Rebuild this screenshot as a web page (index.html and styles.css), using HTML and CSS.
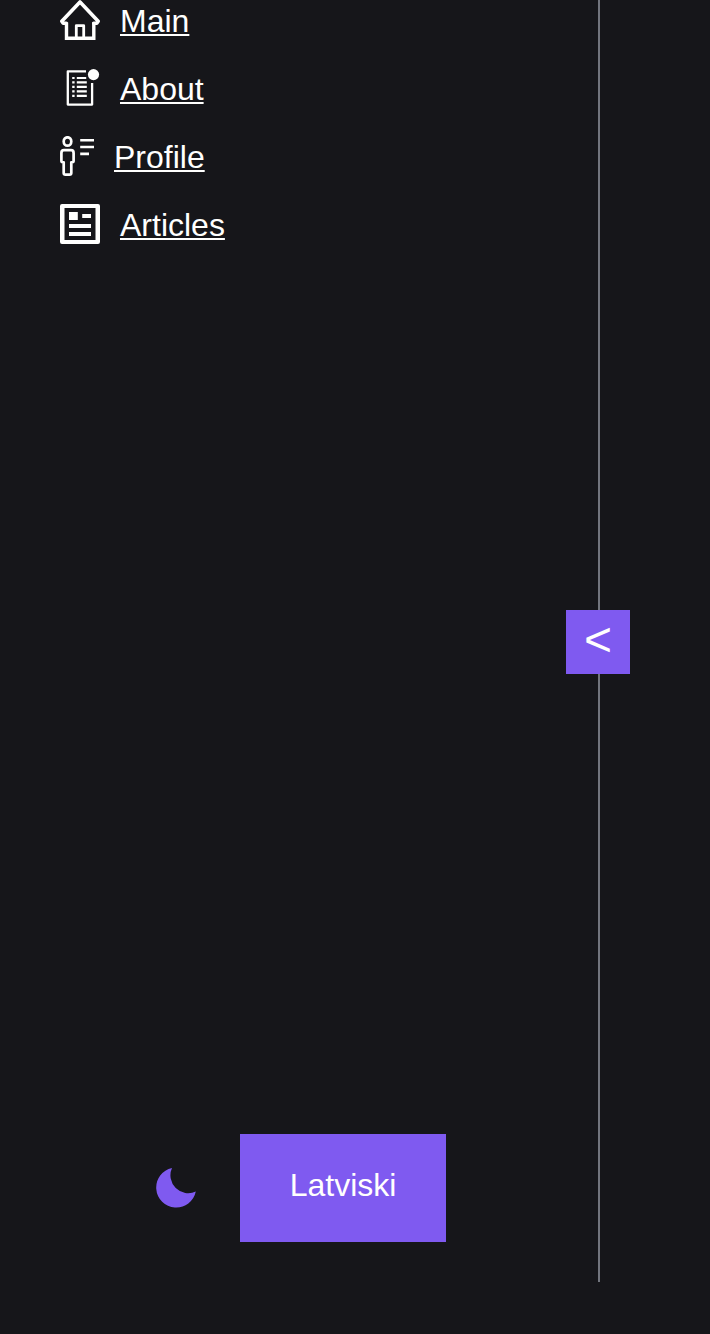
FILE: index.html
```html
<!DOCTYPE html>
<html lang="en">
<head>
<meta charset="utf-8">
<title>Sidebar</title>
<link rel="stylesheet" href="styles.css">
</head>
<body>
<aside class="sidebar">
  <nav class="menu">
    <a class="item" href="#">
      <svg class="icon" width="40" height="40" viewBox="0 0 40 40"><path fill="none" stroke="currentColor" stroke-width="3.6" stroke-linejoin="round" stroke-linecap="round" d="M6.3 23.2H3.2L1.8 21.2 20 2 38.2 21.2 36.8 23.2H33.7"/><path fill="none" stroke="currentColor" stroke-width="3.4" d="M6.5 22.5V38.300H33.800V22.500"/><path fill="none" stroke="currentColor" stroke-width="2.800" stroke-linejoin="round" d="M16.300 38V25.600H23.700V38"/></svg>
      <span class="label">Main</span>
    </a>
    <a class="item" href="#">
      <svg class="icon" width="40" height="40" viewBox="0 0 40 40"><path fill="none" stroke="currentColor" stroke-width="2.300" stroke-linejoin="round" d="M26 3.300H7.800V36.600H32.100V15"/><circle cx="33.500" cy="6.600" r="5.600" fill="currentColor"/><path fill="none" stroke="currentColor" stroke-width="2.200" d="M12.200 10H14.600M16.800 10H26.200M12.200 14.400H14.600M16.800 14.400H26.800M12.200 18.800H14.600M16.800 18.800H26.800M12.200 23.300H14.600M16.800 23.300H26.800M12.200 27.800H14.600M16.800 27.800H26.800"/></svg>
      <span class="label">About</span>
    </a>
    <a class="item" href="#">
      <svg class="icon" width="34" height="40" viewBox="0 0 34 40"><g fill="none" stroke="currentColor" stroke-width="2.700" stroke-linejoin="round"><ellipse cx="7.500" cy="5.500" rx="3.800" ry="4.200"/><path d="M4 14.200H11Q13.600 14.200 13.600 17V25Q13.600 26.300 11.300 26.300V37Q11.300 38.600 9.500 38.600H5.500Q3.700 38.600 3.700 37V26.300Q1.400 26.300 1.400 25V17Q1.400 14.200 4 14.200Z"/><path stroke-width="2.600" d="M20.200 4.200H34M20.200 11H34M20.200 17.900H29"/></g></svg>
      <span class="label">Profile</span>
    </a>
    <a class="item" href="#">
      <svg class="icon" width="40" height="40" viewBox="0 0 40 40"><path fill="currentColor" fill-rule="evenodd" d="M2 0H38Q40 0 40 2V38Q40 40 38 40H2Q0 40 0 38V2Q0 0 2 0ZM4.500 4V36H35.500V4Z"/><path fill="currentColor" d="M9 8H17.800V16H9ZM22.200 10H31V14H22.200ZM9 20H31V24H9ZM9 28H31V32H9Z"/></svg>
      <span class="label">Articles</span>
    </a>
  </nav>
  <div class="switchers">
    <button class="theme" aria-label="Theme"><svg class="icon" width="40" height="40" viewBox="0 0 40 40"><path fill="currentColor" d="M16 0A20 20 0 1 0 39.800 23.600A17.900 17.900 0 0 1 16 0Z"/></svg></button>
    <button class="lang">Latviski</button>
  </div>
  <button class="collapse">&lt;</button>
</aside>
</body>
</html>
```
FILE: styles.css
```css
body {
  margin: 0;
  min-height: 1334px;
  background: #16161a;
  color: #fffffe;
  font: 32px/36px "Liberation Sans", Arial, sans-serif;
}
.sidebar {
  position: relative;
  box-sizing: border-box;
  display: flex;
  flex-direction: column;
  justify-content: space-between;
  width: 600px;
  height: 1282px;
  padding-bottom: 40px;
  border-right: 2px solid #72757e;
}
.menu {
  display: flex;
  flex-direction: column;
  gap: 28px;
  padding-left: 60px;
}
.item {
  display: flex;
  align-items: center;
  gap: 20px;
  height: 40px;
  color: inherit;
  text-decoration: none;
}
.label {
  padding-top: 2px;
  text-decoration: underline 2px;
  text-underline-offset: 2px;
}
.icon {
  display: block;
  flex: none;
}
button {
  padding: 0;
  border: 0;
  background: none;
  color: inherit;
  font: inherit;
}
.switchers {
  display: flex;
  align-items: center;
  justify-content: center;
  gap: 44px;
  padding-left: 4px;
}
.theme {
  color: #7f5af0;
}
.lang {
  width: 206px;
  height: 108px;
  padding-bottom: 6px;
  background: #7f5af0;
}
.collapse {
  position: absolute;
  top: 610px;
  right: -32px;
  width: 64px;
  height: 64px;
  padding-bottom: 4px;
  background: #7f5af0;
  font-size: 48px;
  line-height: 60px;
}
```
